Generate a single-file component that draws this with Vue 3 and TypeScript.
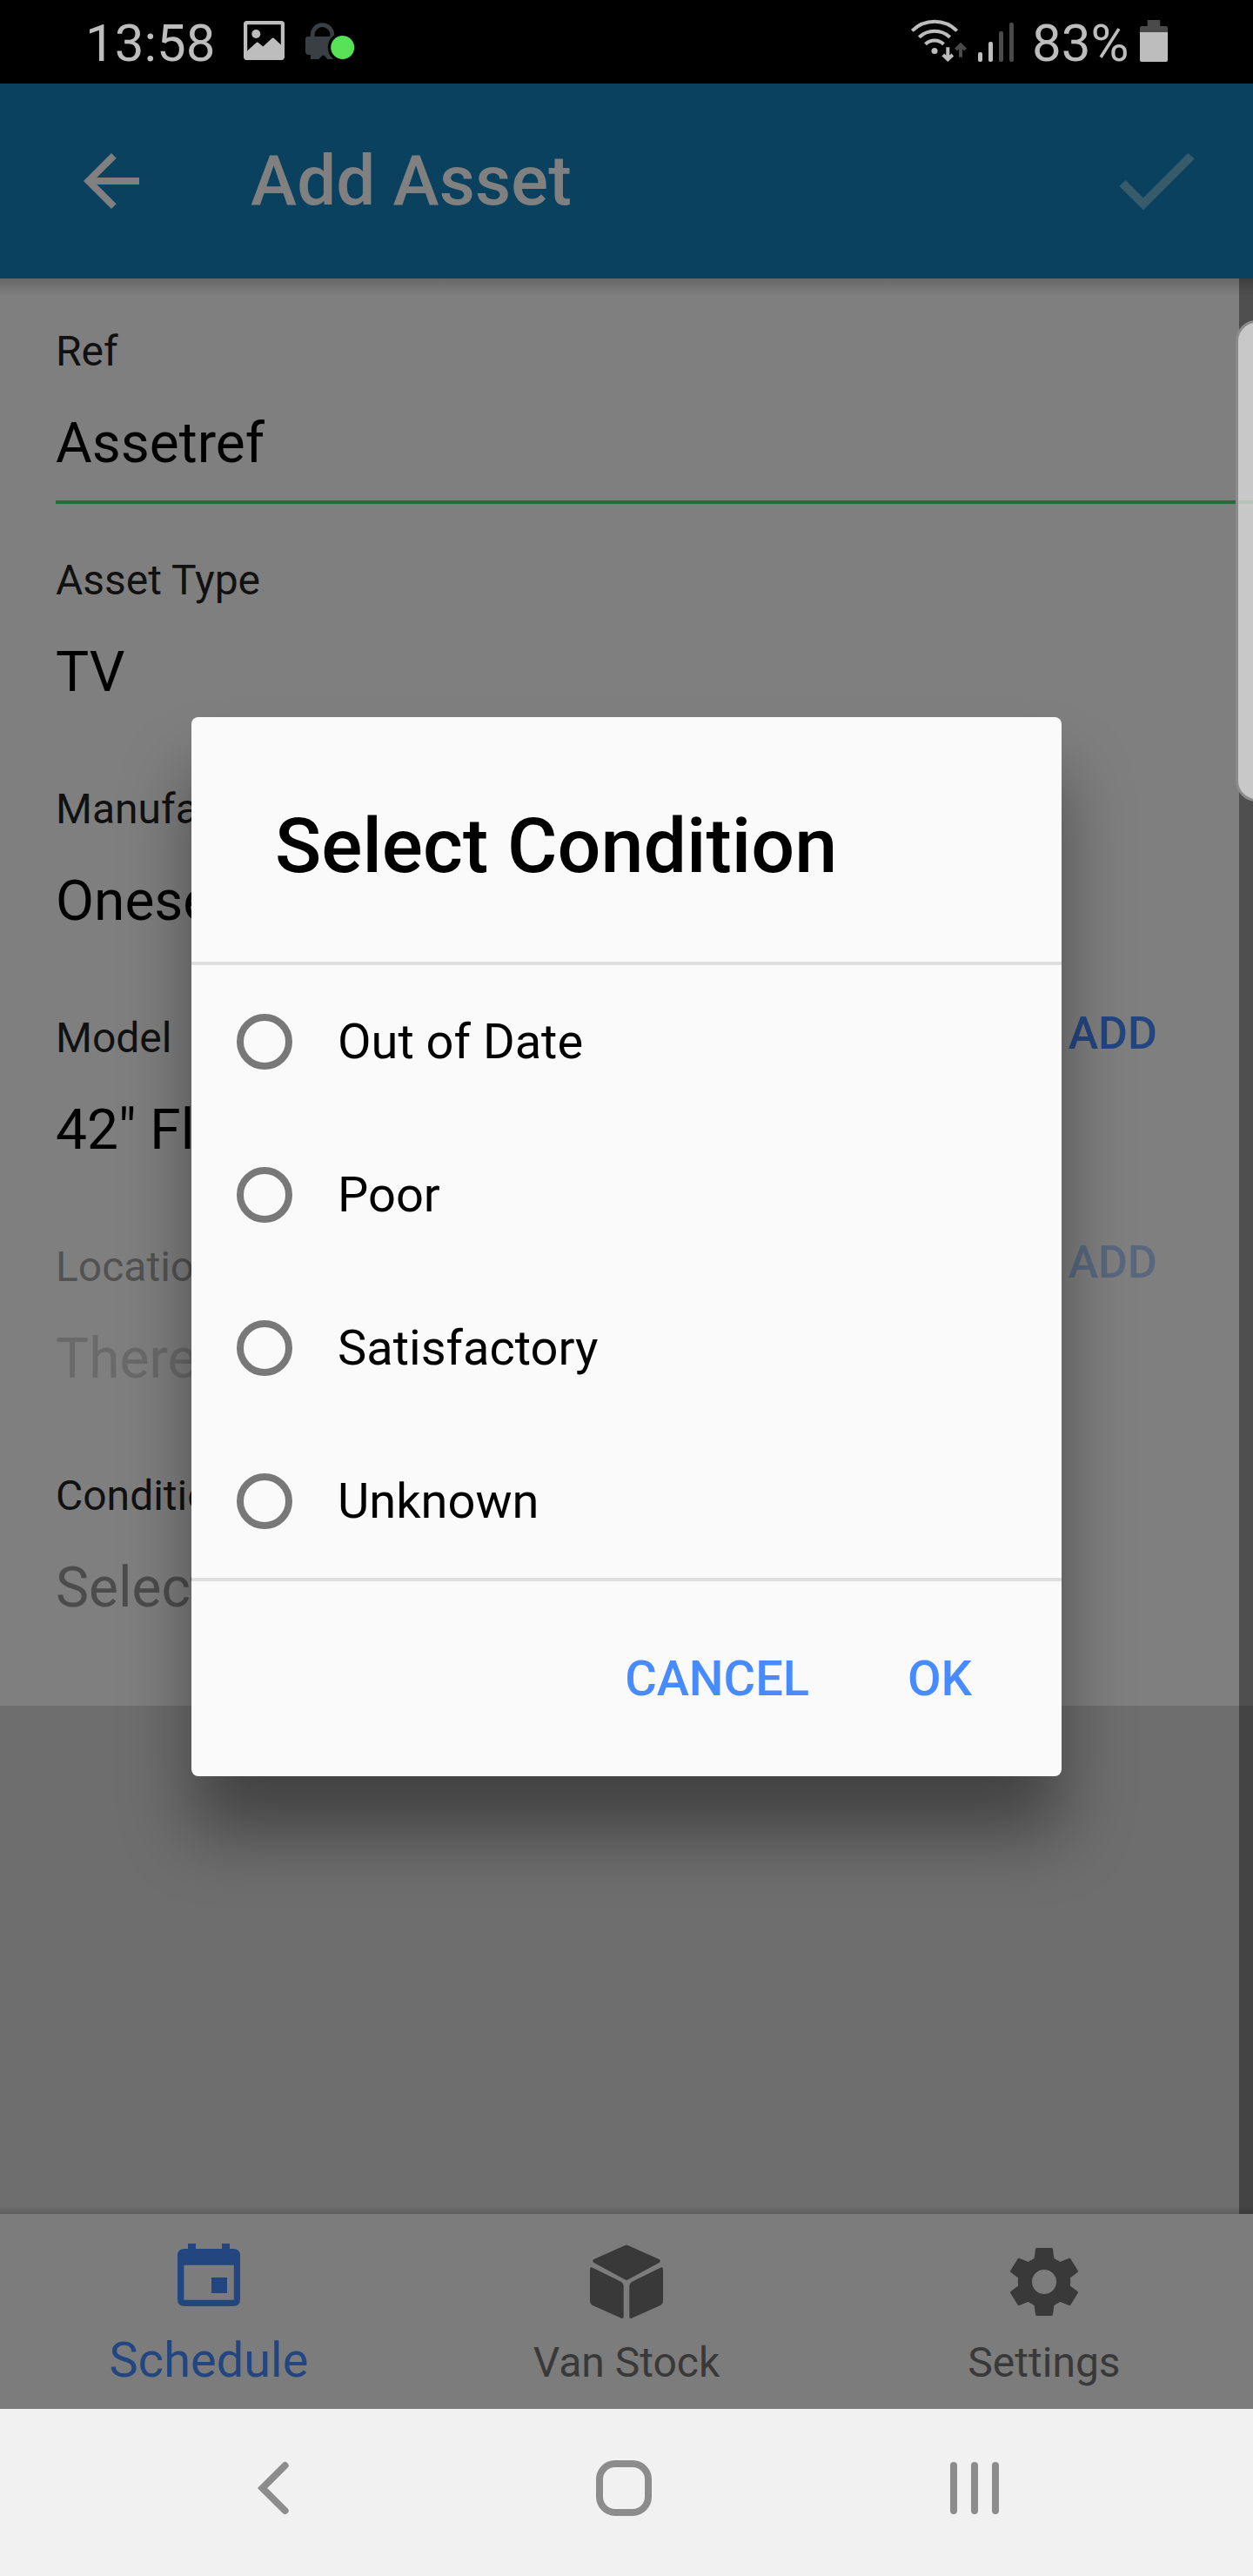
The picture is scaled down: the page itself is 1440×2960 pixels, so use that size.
<script setup lang="ts">
interface Field {
  label: string
  value: string
  placeholder?: boolean
  disabled?: boolean
  focused?: boolean
  action?: string
}

const fields: Field[] = [
  { label: 'Ref', value: 'Assetref', focused: true },
  { label: 'Asset Type', value: 'TV' },
  { label: 'Manufacturer', value: 'Oneserve' },
  { label: 'Model', value: '42" Flat', action: 'ADD' },
  { label: 'Location', value: 'There are', placeholder: true, disabled: true, action: 'ADD' },
  { label: 'Condition', value: 'Select', placeholder: true },
]

const options: string[] = ['Out of Date', 'Poor', 'Satisfactory', 'Unknown']
</script>

<template>
  <div class="screen">
    <div class="status">
      <span class="clock">13:58</span>
      <svg class="photo" width="47" height="45" viewBox="0 0 47 45">
        <rect x="2" y="2" width="43" height="41" rx="2" fill="none" stroke="#bdbdbd" stroke-width="4.4" />
        <circle cx="14.3" cy="15" r="5" fill="#bdbdbd" />
        <path d="M3 35.5 L14.2 25.2 Q15.7 24 17.2 25.2 L22.3 29.4 L32.2 20.2 Q33.7 18.8 35.2 20.2 L44 28.5 V43 H3z" fill="#bdbdbd" />
      </svg>
      <svg class="lock" width="58" height="44" viewBox="0 0 58 44">
        <path d="M8.2 19 V14 A11.3 11.3 0 0 1 30.8 14 V19" fill="none" stroke="#3a3f46" stroke-width="4.8" />
        <path d="M3 16 H33 Q36 16 36 19 V34 Q36 37 33 37 L33 42 H25.5 L22 38.2 Q20.5 37 19 38.2 L15.5 42 H6 V37 H3 Q0 36 0 33 V19 Q0 16 3 16z" fill="#3a3f46" />
        <circle cx="42.7" cy="28.5" r="17" fill="#000" />
        <circle cx="42.7" cy="28.5" r="13.5" fill="#56e156" />
      </svg>
      <div class="spacer"></div>
      <svg class="signal" width="120" height="52" viewBox="26 20 120 52">
        <g fill="none" stroke="#bdbdbd" stroke-width="4">
          <path d="M28.3 35.3 A36.5 36.5 0 0 1 79.7 35.3" />
          <path d="M36.3 42.8 A25.8 25.8 0 0 1 71.7 42.8" />
          <path d="M43.5 50.8 A15 15 0 0 1 64.5 50.8" />
          <path d="M69.3 54.3 V68 M63.8 63 L69.3 68.3 L74.8 63" />
          <path d="M84 65.7 V52 M78.5 57 L84 51.6 L89.5 57" stroke="#4a4a4a" />
        </g>
        <circle cx="54" cy="58.6" r="3.5" fill="#bdbdbd" />
        <rect x="104" y="60" width="5" height="11" rx="2" fill="#bdbdbd" />
        <rect x="116" y="48" width="5" height="23" rx="2" fill="#bdbdbd" />
        <rect x="128" y="36" width="5" height="35" rx="2" fill="#4a4a4a" />
        <rect x="140" y="26" width="5" height="45" rx="2" fill="#4a4a4a" />
      </svg>
      <span class="percent">83%</span>
      <svg class="battery" width="32" height="48" viewBox="0 0 32 48">
        <path d="M8.7 0 H23.3 V7 H30 Q32 7 32 9 V14 H0 V9 Q0 7 2 7 H8.7z" fill="#4a4a4a" />
        <path d="M0 14 H32 V46 Q32 48 30 48 H2 Q0 48 0 46z" fill="#bdbdbd" />
      </svg>
    </div>

    <header class="header">
      <svg width="96" height="96" viewBox="0 0 24 24">
        <path d="M20 11H7.83l5.59-5.59L12 4l-8 8 8 8 1.41-1.41L7.83 13H20v-2z" fill="#808080" />
      </svg>
      <h1>Add Asset</h1>
      <svg class="check" width="115" height="115" viewBox="0 0 512 512">
        <path d="M186.301 339.893 96 249.461 64 279.968 186.301 402 448 140.506 416 110z" fill="#385b6b" />
      </svg>
    </header>

    <main class="content">
      <div class="form">
        <div
          v-for="field in fields"
          :key="field.label"
          class="item"
          :class="{ focused: field.focused, disabled: field.disabled }"
        >
          <div class="text">
            <div class="label">{{ field.label }}</div>
            <div class="value" :class="{ placeholder: field.placeholder }">{{ field.value }}</div>
          </div>
          <button v-if="field.action" class="add">{{ field.action }}</button>
        </div>
      </div>
      <div class="edge-strip"></div>
    </main>

    <nav class="tabs">
      <div class="tab active">
        <svg class="calendar" width="72" height="72" viewBox="0 0 72 72">
          <path
            fill="#234680"
            fill-rule="evenodd"
            d="M12 0h9v6h30V0h9v6h4q8 0 8 8v50q0 8-8 8H8q-8 0-8-8V14q0-8 8-8h4z M7.4 24.7v40h57.4v-40z M39 39h18v18H39z"
          />
        </svg>
        <span>Schedule</span>
      </div>
      <div class="tab">
        <svg class="cube" width="84" height="86" viewBox="0 0 84 86">
          <g fill="#393939">
            <path d="M40.6 1 Q42 0.2 43.4 1 L79.5 17 Q82.2 19 79.5 21 L44 40.2 Q42 41.3 40 40.2 L4.5 21 Q1.8 19 4.5 17z" />
            <path d="M0 28 Q0.5 25.5 3 26.8 L35 42.5 Q38.7 44.5 38.7 48 V83 Q38.2 86 35.5 84.5 L3 70 Q0 68.3 0 64z" />
            <path d="M84 28 Q83.5 25.5 81 26.8 L49 42.5 Q45.3 44.5 45.3 48 V83 Q45.8 86 48.5 84.5 L81 70 Q84 68.3 84 64z" />
          </g>
        </svg>
        <span>Van Stock</span>
      </div>
      <div class="tab">
        <svg class="gear" width="78" height="78" viewBox="-39 -39 78 78">
          <path
            fill="#393939"
            fill-rule="evenodd"
            d="M-8.4-39H8.4Q9.8-39 10-37.6L11.4-27 18.4-23 28.4-27Q29.8-27.5 30.5-26.3L38.7-13Q39.4-11.8 38.4-11L29.8-4.4Q30.6 0 29.8 4.4L38.4 11Q39.4 11.8 38.7 13L30.5 26.3Q29.8 27.5 28.4 27L18.4 23 11.4 27 10 37.6Q9.8 39 8.4 39H-8.4Q-9.8 39-10 37.6L-11.4 27-18.4 23-28.4 27Q-29.8 27.5-30.5 26.3L-38.7 13Q-39.4 11.8-38.4 11L-29.8 4.4Q-30.6 0-29.8-4.4L-38.4-11Q-39.4-11.8-38.7-13L-30.5-26.3Q-29.8-27.5-28.4-27L-18.4-23-11.4-27-10-37.6Q-9.8-39-8.4-39z M0-14A14 14 0 1 0 0 14A14 14 0 1 0 0-14z"
          />
        </svg>
        <span>Settings</span>
      </div>
    </nav>

    <footer class="system-nav">
      <svg width="1440" height="192" viewBox="0 0 1440 192" fill="none" stroke="#8c8c8c" stroke-width="8" stroke-linecap="round">
        <path d="M327.6 65 L301.6 91 L327.6 117" />
        <rect x="689" y="63" width="56" height="56" rx="18" />
        <path d="M1096 65V117M1120 65V117M1144 65V117" />
      </svg>
    </footer>

    <div class="handle"><i></i></div>

    <section class="dialog">
      <h2>Select Condition</h2>
      <ul>
        <li v-for="option in options" :key="option">
          <span class="radio"></span>
          <span>{{ option }}</span>
        </li>
      </ul>
      <div class="actions">
        <button>CANCEL</button>
        <button>OK</button>
      </div>
    </section>
  </div>
</template>

<style>
body {
  margin: 0;
}
</style>

<style scoped>
.screen {
  position: relative;
  display: flex;
  flex-direction: column;
  width: 1440px;
  height: 2960px;
  overflow: hidden;
  background: #6e6e6e;
  font-family: Roboto, "Liberation Sans", sans-serif;
}
h1,
h2,
ul {
  margin: 0;
  padding: 0;
  font-weight: 500;
}
button {
  padding: 0;
  border: 0;
  background: none;
  font-family: inherit;
  font-weight: 500;
}
svg {
  display: block;
  flex: none;
}
.status {
  display: flex;
  align-items: flex-start;
  box-sizing: border-box;
  height: 96px;
  padding: 0 98px;
  background: #000;
  color: #bdbdbd;
  font-size: 60px;
  line-height: 99px;
}
.clock {
  width: 182px;
}
.photo {
  margin-top: 24px;
}
.lock {
  margin: 26px 0 0 24px;
}
.spacer {
  flex: 1;
}
.signal {
  margin-top: 20px;
}
.percent {
  width: 124px;
  margin-left: 20px;
}
.battery {
  margin-top: 23px;
}
.header {
  position: relative;
  z-index: 2;
  display: flex;
  align-items: center;
  box-sizing: border-box;
  height: 224px;
  padding: 0 53px 0 80px;
  background: #09415f;
}
.header::after {
  content: "";
  position: absolute;
  top: 224px;
  left: 0;
  width: 100%;
  height: 20px;
  background: linear-gradient(rgba(0, 0, 0, 0.19), rgba(0, 0, 0, 0.09) 50%, rgba(0, 0, 0, 0));
}
.header h1 {
  flex: 1;
  margin-left: 112px;
  color: #808080;
  font-size: 80px;
  line-height: 96px;
  letter-spacing: 0.1px;
}
.content {
  position: relative;
  height: 2224px;
}
.form {
  box-sizing: border-box;
  height: 1640px;
  background: #7f7f7f;
}
.item {
  display: flex;
  justify-content: space-between;
  align-items: flex-start;
  box-sizing: border-box;
  height: 263px;
  margin-left: 64px;
  padding-top: 60px;
}
.item.focused {
  height: 259px;
  padding-top: 56px;
  border-bottom: 4px solid #216e39;
}
.disabled {
  opacity: 0.4;
}
.label {
  color: #111;
  font-size: 48px;
  line-height: 56px;
}
.value {
  margin-top: 42px;
  color: #000;
  font-size: 64px;
  line-height: 72px;
}
.placeholder {
  color: #4c4c4c;
}
.add {
  margin: -5px 110px 0 0;
  color: #234680;
  font-size: 52px;
  line-height: 56px;
}
.edge-strip {
  position: absolute;
  top: 0;
  right: 0;
  width: 16px;
  height: 2224px;
  background: rgba(0, 0, 0, 0.38);
}
.tabs {
  position: relative;
  display: flex;
  height: 224px;
  background: #7c7c7c;
  color: #393939;
  font-size: 48px;
}
.tabs::before {
  content: "";
  position: absolute;
  top: -8px;
  left: 0;
  width: 100%;
  height: 8px;
  background: linear-gradient(rgba(0, 0, 0, 0.02), rgba(0, 0, 0, 0.14));
}
.tab {
  display: flex;
  flex: 1;
  flex-direction: column;
  align-items: center;
}
.tab span {
  line-height: 60px;
}
.calendar {
  margin: 34px 0 32px;
}
.cube {
  margin: 35px 0 20px;
}
.gear {
  margin: 39px 0 24px;
}
.active {
  color: #234680;
  font-size: 56px;
}
.system-nav {
  height: 192px;
  background: #f1f1f1;
}
.handle {
  position: absolute;
  z-index: 3;
  top: 368px;
  right: -30px;
  box-sizing: border-box;
  width: 50px;
  height: 553px;
  border: 3px solid #8b8b8b;
  border-radius: 24px;
  background: #c8c8c8;
}
.handle i {
  display: block;
  height: 4px;
  margin-top: 204px;
  background: #b5c3b9;
}
.dialog {
  position: absolute;
  z-index: 4;
  top: 824px;
  left: 220px;
  width: 1000px;
  height: 1217px;
  border-radius: 8px;
  background: #fafafa;
  box-shadow: 0 64px 80px rgba(0, 0, 0, 0.4);
  color: #000;
}
.dialog h2 {
  height: 185px;
  padding: 96px 96px 0;
  font-size: 88px;
  line-height: 104px;
}
.dialog ul {
  border-top: 4px solid #dedede;
  border-bottom: 4px solid #dedede;
  list-style: none;
}
.dialog li {
  display: flex;
  align-items: center;
  gap: 52px;
  height: 176px;
  padding-left: 52px;
  font-size: 56px;
  font-weight: 400;
  line-height: 66px;
}
.radio {
  box-sizing: border-box;
  width: 64px;
  height: 64px;
  border: 8px solid #787878;
  border-radius: 50%;
}
.actions {
  display: flex;
  justify-content: flex-end;
  align-items: center;
  gap: 113px;
  height: 224px;
  padding-right: 103px;
}
.actions button {
  color: #488aff;
  font-size: 56px;
  line-height: 66px;
}
</style>
